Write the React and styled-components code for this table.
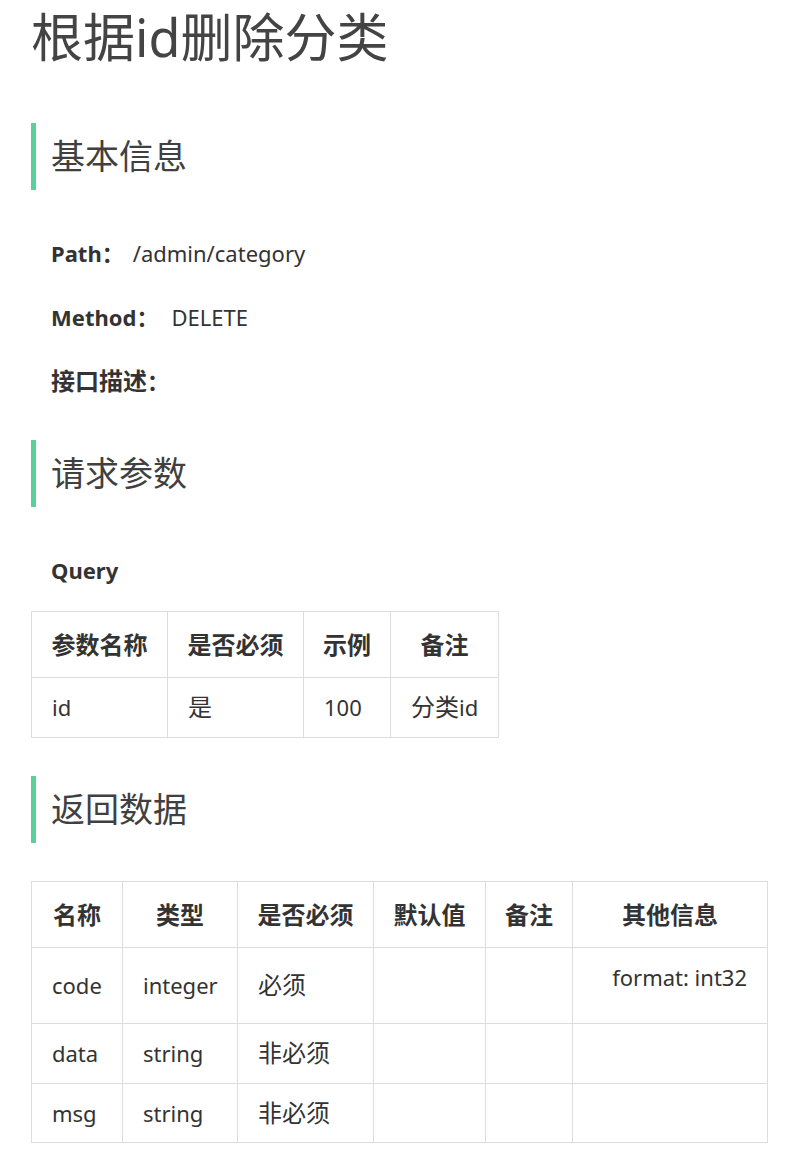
import React from 'react';
import styled, { createGlobalStyle } from 'styled-components';

const GlobalStyle = createGlobalStyle`
  body {
    margin: 0;
    background: #fff;
    font-family: 'Noto Sans', 'Noto Sans CJK SC', sans-serif;
    color: #333;
  }
`;

const Page = styled.div`
  padding: 0 31px 30px;
`;

const Title = styled.h1`
  margin: 0;
  font-size: 52px;
  line-height: 74px;
  font-weight: 400;
  color: #444;
`;

const SectionTitle = styled.h2`
  margin: ${(p) => p.$top}px 0 0;
  height: 67px;
  line-height: 67px;
  padding-left: 15px;
  border-left: 5px solid #59d19b;
  font-size: 34px;
  font-weight: 400;
  color: #404040;
`;

const Fields = styled.div`
  display: flex;
  flex-direction: column;
  gap: 31px;
  margin-top: 46.5px;
  padding-left: 20px;
`;

const Field = styled.div`
  height: 33px;
  font-size: 22px;
  line-height: 33px;
  color: #333;
`;

const Label = styled.b`
  font-weight: 700;
  margin-right: ${(p) => p.$gap}px;
`;

// CJK glyphs render a bit larger than the latin text in the original
const Cjk = styled.span`
  font-size: 24px;
  line-height: 0;
`;

const SubTitle = styled.div`
  margin-top: 46.5px;
  padding-left: 20px;
  font-size: 22px;
  line-height: 33px;
  font-weight: 700;
`;

const Table = styled.table`
  margin-top: ${(p) => p.$top}px;
  width: ${(p) => p.$w}px;
  table-layout: fixed;
  border-collapse: collapse;
  font-size: 22px;
  line-height: 33px;
  color: #333;
`;

const Th = styled.th`
  height: 66px;
  box-sizing: border-box;
  padding: 0;
  border: 1px solid #ddd;
  font-size: 24px;
  font-weight: 700;
  text-align: center;
  white-space: nowrap;
`;

const Td = styled.td`
  height: ${(p) => p.$h || 60}px;
  box-sizing: border-box;
  padding: 0 20px;
  border: 1px solid #ddd;
  text-align: left;
  white-space: nowrap;
  vertical-align: middle;
`;

const Note = styled.div`
  text-align: right;
  margin-bottom: 16px;
`;

const paramCols = [
  { name: '参数名称', w: 136 },
  { name: '是否必须', w: 136 },
  { name: '示例', w: 87 },
  { name: '备注', w: 108 },
];

const resCols = [
  { name: '名称', w: 91 },
  { name: '类型', w: 115 },
  { name: '是否必须', w: 136 },
  { name: '默认值', w: 112 },
  { name: '备注', w: 87 },
  { name: '其他信息', w: 195 },
];

const resRows = [
  { name: 'code', type: 'integer', req: '必须', other: 'format: int32', h: 76 },
  { name: 'data', type: 'string', req: '非必须', other: '', h: 60 },
  { name: 'msg', type: 'string', req: '非必须', other: '', h: 59 },
];

const total = (cols) => cols.reduce((s, c) => s + c.w, 0) + 1;

export default function App() {
  return (
    <Page>
      <GlobalStyle />
      <Title>根据id删除分类</Title>

      <SectionTitle $top={49}>基本信息</SectionTitle>
      <Fields>
        <Field>
          <Label $gap={9}>Path：</Label>/admin/category
        </Field>
        <Field>
          <Label $gap={13}>Method：</Label>DELETE
        </Field>
        <Field>
          <Label><Cjk>接口描述</Cjk>：</Label>
        </Field>
      </Fields>

      <SectionTitle $top={42.5}>请求参数</SectionTitle>
      <SubTitle>Query</SubTitle>
      <Table $top={24.5} $w={total(paramCols)}>
        <colgroup>
          {paramCols.map((c) => (
            <col key={c.name} style={{ width: c.w }} />
          ))}
        </colgroup>
        <thead>
          <tr>
            {paramCols.map((c) => (
              <Th key={c.name}>{c.name}</Th>
            ))}
          </tr>
        </thead>
        <tbody>
          <tr>
            <Td>id</Td>
            <Td><Cjk>是</Cjk></Td>
            <Td>100</Td>
            <Td><Cjk>分类</Cjk>id</Td>
          </tr>
        </tbody>
      </Table>

      <SectionTitle $top={38}>返回数据</SectionTitle>
      <Table $top={38} $w={total(resCols)}>
        <colgroup>
          {resCols.map((c) => (
            <col key={c.name} style={{ width: c.w }} />
          ))}
        </colgroup>
        <thead>
          <tr>
            {resCols.map((c) => (
              <Th key={c.name}>{c.name}</Th>
            ))}
          </tr>
        </thead>
        <tbody>
          {resRows.map((r) => (
            <tr key={r.name}>
              <Td $h={r.h}>{r.name}</Td>
              <Td $h={r.h}>{r.type}</Td>
              <Td $h={r.h}><Cjk>{r.req}</Cjk></Td>
              <Td $h={r.h} />
              <Td $h={r.h} />
              <Td $h={r.h}>{r.other && <Note>{r.other}</Note>}</Td>
            </tr>
          ))}
        </tbody>
      </Table>
    </Page>
  );
}
